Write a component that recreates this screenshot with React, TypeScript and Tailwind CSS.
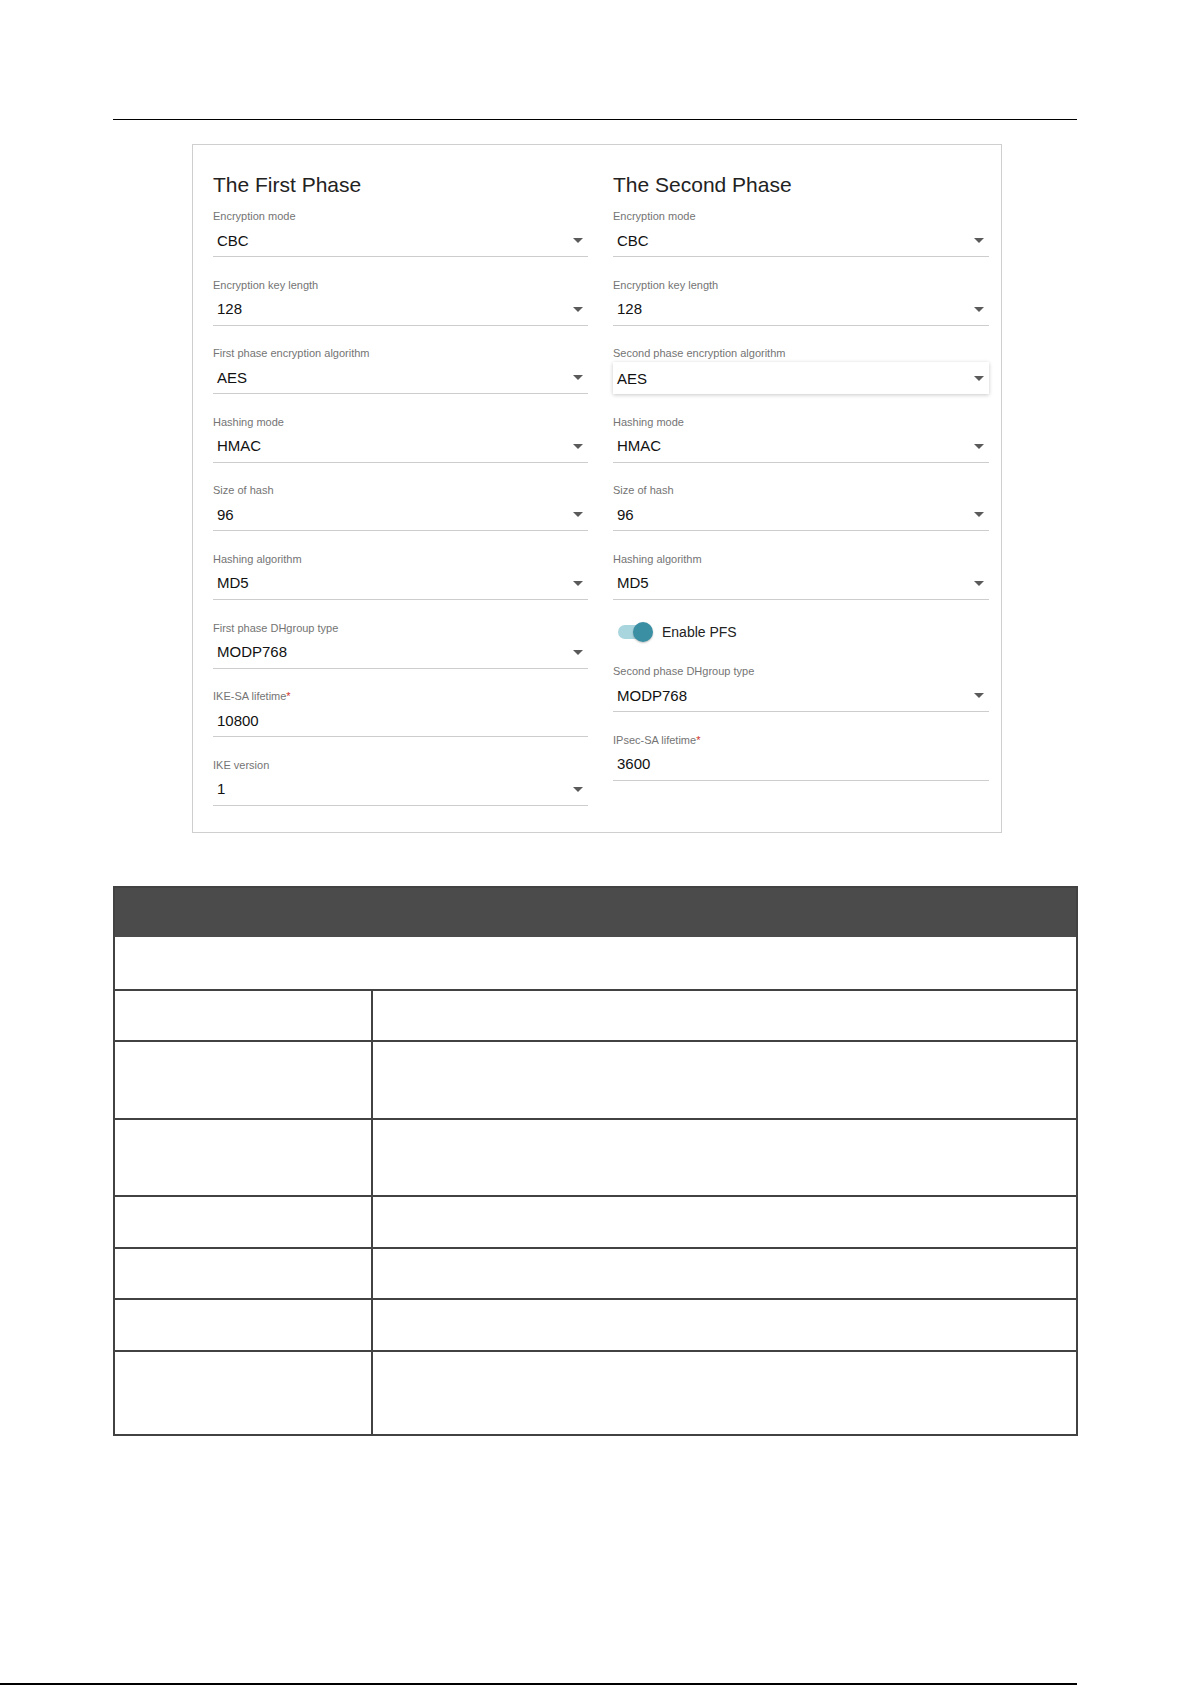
import React from "react";

type FieldProps = {
  label: string;
  value: string;
  required?: boolean;
  select?: boolean;
  raised?: boolean;
};

function Caret() {
  return (
    <svg width="10" height="5" viewBox="0 0 10 5" className="shrink-0">
      <path d="M0 0h10L5 5z" fill="#5a5a5a" />
    </svg>
  );
}

function Field({ label, value, required, select = true, raised }: FieldProps) {
  return (
    <div className="flex flex-col">
      <div className="h-4 text-[11px] leading-[15px] text-[#747474]">
        {label}
        {required && <span className="text-[#d0342c]">*</span>}
      </div>
      {raised ? (
        <div className="flex h-[32px] items-center bg-white pt-[1px] pl-1 pr-[5px] shadow-[0_1px_4px_rgba(0,0,0,0.22)]">
          <span className="flex-1 text-[15px] leading-6 text-[#111]">{value}</span>
          {select && <Caret />}
        </div>
      ) : (
        <div className="mt-[3px] flex h-[29px] items-center border-b border-[#cdcdcd] pb-[3px] pl-1 pr-[5px]">
          <span className="flex-1 text-[15px] leading-6 text-[#111]">{value}</span>
          {select && <Caret />}
        </div>
      )}
    </div>
  );
}

function Toggle({ label }: { label: string }) {
  return (
    <div className="flex h-[23px] items-center">
      <div className="relative h-5 w-[40px]">
        <div className="absolute left-[5px] top-[3px] h-[14px] w-[32px] rounded-full bg-[#a9d5df]" />
        <div className="absolute left-[20px] top-0 h-5 w-5 rounded-full bg-[#3a8fa3] shadow-[0_1px_2px_rgba(0,0,0,0.25)]" />
      </div>
      <span className="ml-[9px] text-[14px] leading-5 text-[#222]">{label}</span>
    </div>
  );
}

export default function App() {
  return (
    <div className="h-[1685px] w-[1192px] overflow-hidden bg-white font-['Liberation_Sans',Arial,sans-serif]">
      {/* page header rule */}
      <div className="ml-[113px] mt-[119px] h-px w-[964px] bg-black" />

      {/* IPsec phase settings */}
      <div className="ml-[192px] mt-[24px] flex h-[689px] w-[810px] gap-[25px] border border-[#cfcfcf] pl-[20px] pt-[27px]">
        <div className="w-[375px]">
          <h2 className="text-[21px] leading-[26px] text-[#222]">The First Phase</h2>
          <div className="mt-[11px] flex flex-col gap-[20.6px]">
            <Field label="Encryption mode" value="CBC" />
            <Field label="Encryption key length" value="128" />
            <Field label="First phase encryption algorithm" value="AES" />
            <Field label="Hashing mode" value="HMAC" />
            <Field label="Size of hash" value="96" />
            <Field label="Hashing algorithm" value="MD5" />
            <Field label="First phase DHgroup type" value="MODP768" />
            <Field label="IKE-SA lifetime" value="10800" required select={false} />
            <Field label="IKE version" value="1" />
          </div>
        </div>
        <div className="w-[376px]">
          <h2 className="text-[21px] leading-[26px] text-[#222]">The Second Phase</h2>
          <div className="mt-[11px] flex flex-col gap-[20.6px]">
            <Field label="Encryption mode" value="CBC" />
            <Field label="Encryption key length" value="128" />
            <Field label="Second phase encryption algorithm" value="AES" raised />
            <Field label="Hashing mode" value="HMAC" />
            <Field label="Size of hash" value="96" />
            <Field label="Hashing algorithm" value="MD5" />
            <Toggle label="Enable PFS" />
            <Field label="Second phase DHgroup type" value="MODP768" />
            <Field label="IPsec-SA lifetime" value="3600" required select={false} />
          </div>
        </div>
      </div>

      {/* parameter table */}
      <div className="ml-[113px] mt-[53px] w-[965px] border-2 border-[#424242]">
        <div className="h-[49px] bg-[#4b4b4b]" />
        <div className="h-[52px]" />
        {[51, 78, 77, 52, 51, 52, 84].map((h, i) => (
          <div key={i} className="flex border-t-2 border-[#424242]" style={{ height: h }}>
            <div className="w-[258px] border-r-2 border-[#424242]" />
            <div className="flex-1" />
          </div>
        ))}
      </div>

      {/* page footer rule */}
      <div className="mt-[247px] h-[2px] w-[1077px] bg-black" />
    </div>
  );
}
